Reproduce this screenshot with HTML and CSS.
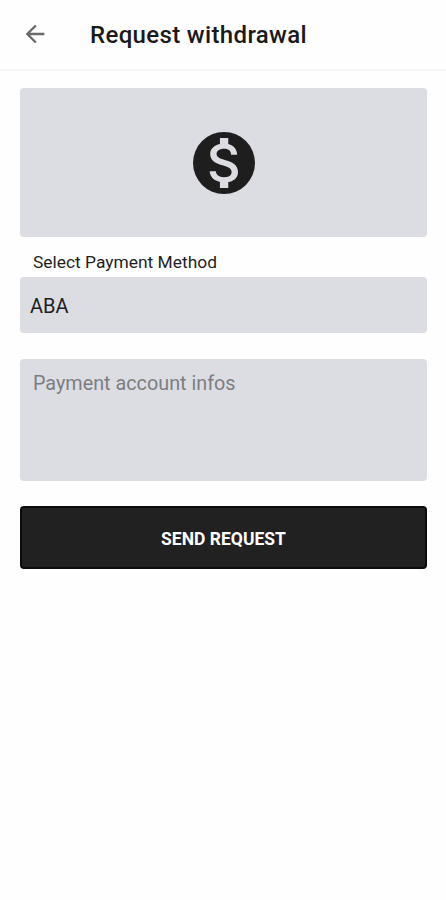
FILE: index.html
```
<!DOCTYPE html>
<html lang="en">
<head>
  <meta charset="UTF-8" />
  <meta name="viewport" content="width=device-width, initial-scale=1.0"/>
  <title>Request withdrawal</title>
  <link rel="stylesheet" href="styles.css">
</head>
<body>
  <header class="topbar">
    <a class="back" aria-label="Back">
      <svg width="28" height="28" viewBox="0 0 24 24">
        <path d="M20 11H7.83l5.59-5.59L12 4l-8 8 8 8 1.41-1.41L7.83 13H20v-2z"/>
      </svg>
    </a>
    <h1>Request withdrawal</h1>
  </header>

  <form class="content">
    <div class="banner">
      <svg width="62" height="62" viewBox="0 0 62 62">
        <circle cx="31" cy="31" r="31" fill="#1e1e1e"/>
        <path fill="#dcdde2" transform="translate(-0.87 -2.34) scale(2.78)" d="M11.8 10.9c-2.27-.59-3-1.2-3-2.15 0-1.09 1.01-1.85 2.7-1.85 1.78 0 2.44.85 2.5 2.1h2.21c-.07-1.72-1.12-3.3-3.21-3.81V3h-3v2.16c-1.94.42-3.5 1.68-3.5 3.61 0 2.31 1.91 3.46 4.7 4.13 2.5.6 3 1.48 3 2.41 0 .69-.49 1.79-2.7 1.79-2.06 0-2.87-.92-2.98-2.1h-2.2c.12 2.19 1.76 3.42 3.68 3.83V21h3v-2.15c1.95-.37 3.5-1.5 3.5-3.55 0-2.84-2.43-3.81-4.7-4.4z"/>
      </svg>
    </div>

    <label for="method">Select Payment Method</label>
    <select id="method">
      <option>ABA</option>
    </select>

    <textarea id="account" placeholder="Payment account infos"></textarea>

    <button type="button">SEND REQUEST</button>
  </form>
</body>
</html>
```
FILE: styles.css
```
body {
  margin: 0;
  font-family: Roboto, sans-serif;
  background-color: #fefefe;
  color: #1e1e1e;
}

.topbar {
  display: flex;
  align-items: center;
  height: 69px;
  border-bottom: 2px solid #f4f4f4;
}

.back {
  display: flex;
  margin: 0 0 2px 21px;
}

.back svg {
  fill: #6a6a6a;
}

h1 {
  margin: 0 0 0 41px;
  font-size: 24px;
  font-weight: 500;
  line-height: 28px;
  letter-spacing: 0.35px;
  color: #1a1a1a;
}

.content {
  display: flex;
  flex-direction: column;
  padding: 17px 19px 0 20px;
}

.banner {
  display: flex;
  box-sizing: border-box;
  align-items: center;
  justify-content: center;
  height: 149px;
  padding-top: 1px;
  background-color: #dcdde2;
  border-radius: 4px;
}

label {
  padding: 15px 13px 5px;
  font-size: 17.4px;
  line-height: 20px;
}

select,
textarea,
button {
  box-sizing: border-box;
  width: 100%;
  border: none;
  border-radius: 4px;
  font-family: inherit;
}

select {
  appearance: none;
  height: 56px;
  padding: 1px 10px 0;
  background-color: #dcdde2;
  color: #1e1e1e;
  font-size: 20px;
}

textarea {
  height: 122px;
  margin-top: 26px;
  padding: 13px 13px 12px;
  background-color: #dcdde2;
  font-size: 19.8px;
  line-height: 24px;
  resize: none;
}

textarea::placeholder {
  color: #7c7d81;
}

button {
  height: 63px;
  margin-top: 25px;
  padding: 2px 0 0;
  background-color: #212121;
  border: 2px solid #0c0c0c;
  color: #fff;
  font-size: 17.5px;
  font-weight: 700;
}
```
